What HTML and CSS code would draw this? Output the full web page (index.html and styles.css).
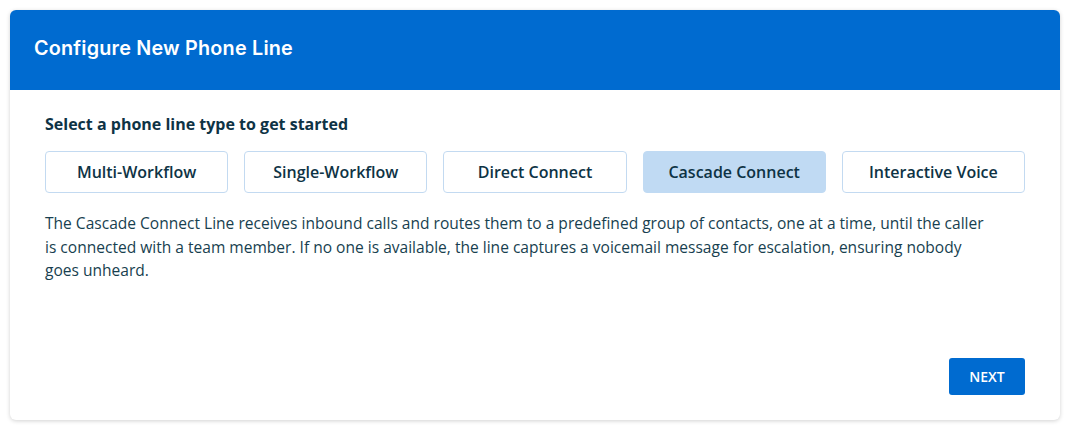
FILE: index.html
```html
<!DOCTYPE html>
<html lang="en">
<head>
    <meta charset="UTF-8">
    <meta name="viewport" content="width=device-width, initial-scale=1.0">
    <title>Configure New Phone Line</title>
    <link rel="stylesheet" href="styles.css">
</head>
<body>
    <div class="card">
        <div class="card-header">
            <h1>Configure New Phone Line</h1>
        </div>

        <div class="card-body">
            <h2>Select a phone line type to get started</h2>
            <div class="line-types">
                <button class="line-type">Multi-Workflow</button>
                <button class="line-type">Single-Workflow</button>
                <button class="line-type">Direct Connect</button>
                <button class="line-type selected">Cascade Connect</button>
                <button class="line-type">Interactive Voice</button>
            </div>
            <p class="description">The Cascade Connect Line receives inbound calls and routes them to a predefined group of contacts, one at a time, until the caller is connected with a team member. If no one is available, the line captures a voicemail message for escalation, ensuring nobody goes unheard.</p>
        </div>

        <div class="card-footer">
            <button class="next">NEXT</button>
        </div>
    </div>
</body>
</html>
```

FILE: styles.css
```css
body {
    font-family: "Open Sans", Arial, sans-serif;
    background-color: #fff;
    color: #0e3345;
    margin: 0;
    padding: 10px;
}

.card {
    height: 410px;
    display: flex;
    flex-direction: column;
    background: #fff;
    border-radius: 6px;
    box-shadow: 0 1px 4px rgba(0, 0, 0, 0.18);
    overflow: hidden;
}

.card-header {
    height: 80px;
    box-sizing: border-box;
    display: flex;
    align-items: center;
    padding: 0 24px 4px;
    background-color: #006bd0;
}

.card-header h1 {
    margin: 0;
    color: #fff;
    font-family: Inter, "Open Sans", sans-serif;
    font-size: 19.8px;
    font-weight: 600;
    letter-spacing: 0.2px;
}

.card-body {
    flex: 1;
    padding: 23px 35px 0;
}

.card-body h2 {
    margin: 0;
    font-size: 16px;
    font-weight: 700;
    line-height: 22px;
}

.line-types {
    display: grid;
    grid-template-columns: repeat(5, 1fr);
    gap: 16px;
    margin-top: 16px;
}

.line-type {
    height: 42px;
    border: 1px solid #c3daf1;
    border-radius: 4px;
    background: #fff;
    color: #0e3345;
    font-family: "Open Sans", Arial, sans-serif;
    font-size: 16px;
    font-weight: 600;
    cursor: pointer;
}

.line-type.selected {
    background-color: #c0daf3;
    border-color: #c0daf3;
}

.description {
    max-width: 945px;
    margin: 19px 0 0;
    font-size: 15.55px;
    line-height: 23.5px;
    color: #183f50;
}

.card-footer {
    display: flex;
    justify-content: flex-end;
    padding: 0 35px 25px;
}

.next {
    width: 76px;
    height: 37px;
    border: none;
    border-radius: 3px;
    background-color: #006bd0;
    color: #fff;
    font-family: "Open Sans", Arial, sans-serif;
    font-size: 14px;
    font-weight: 600;
    cursor: pointer;
}
```
